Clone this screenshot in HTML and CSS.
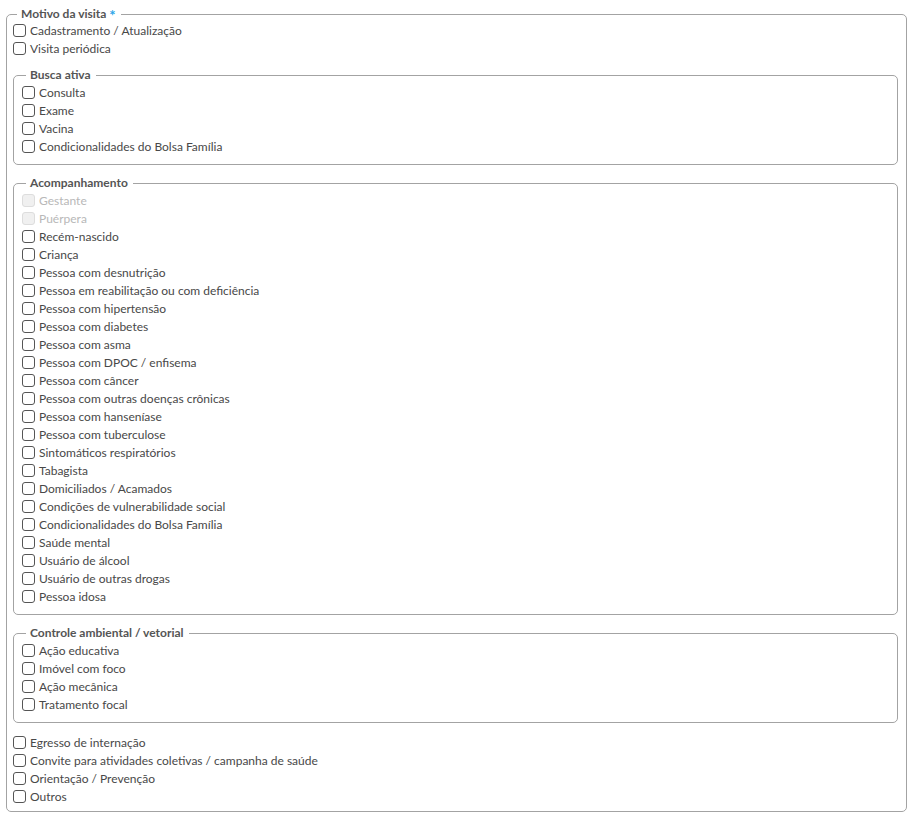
FILE: index.html
```html
<!DOCTYPE html>
<html lang="pt-BR">
<head>
    <meta charset="UTF-8">
    <meta name="viewport" content="width=device-width, initial-scale=1.0">
    <title>Motivo da visita</title>
    <link rel="stylesheet" href="styles.css">
</head>
<body>
    <form class="visit-form">
        <fieldset class="group group-main">
            <legend>Motivo da visita <span class="required">*</span></legend>
            <label class="check"><input type="checkbox"> Cadastramento / Atualização</label>
            <label class="check"><input type="checkbox"> Visita periódica</label>

            <fieldset class="group group-sub">
                <legend>Busca ativa</legend>
                <label class="check"><input type="checkbox"> Consulta</label>
                <label class="check"><input type="checkbox"> Exame</label>
                <label class="check"><input type="checkbox"> Vacina</label>
                <label class="check"><input type="checkbox"> Condicionalidades do Bolsa Família</label>
            </fieldset>

            <fieldset class="group group-sub">
                <legend>Acompanhamento</legend>
                <label class="check disabled"><input type="checkbox" disabled> Gestante</label>
                <label class="check disabled"><input type="checkbox" disabled> Puérpera</label>
                <label class="check"><input type="checkbox"> Recém-nascido</label>
                <label class="check"><input type="checkbox"> Criança</label>
                <label class="check"><input type="checkbox"> Pessoa com desnutrição</label>
                <label class="check"><input type="checkbox"> Pessoa em reabilitação ou com deficiência</label>
                <label class="check"><input type="checkbox"> Pessoa com hipertensão</label>
                <label class="check"><input type="checkbox"> Pessoa com diabetes</label>
                <label class="check"><input type="checkbox"> Pessoa com asma</label>
                <label class="check"><input type="checkbox"> Pessoa com DPOC / enfisema</label>
                <label class="check"><input type="checkbox"> Pessoa com câncer</label>
                <label class="check"><input type="checkbox"> Pessoa com outras doenças crônicas</label>
                <label class="check"><input type="checkbox"> Pessoa com hanseníase</label>
                <label class="check"><input type="checkbox"> Pessoa com tuberculose</label>
                <label class="check"><input type="checkbox"> Sintomáticos respiratórios</label>
                <label class="check"><input type="checkbox"> Tabagista</label>
                <label class="check"><input type="checkbox"> Domiciliados / Acamados</label>
                <label class="check"><input type="checkbox"> Condições de vulnerabilidade social</label>
                <label class="check"><input type="checkbox"> Condicionalidades do Bolsa Família</label>
                <label class="check"><input type="checkbox"> Saúde mental</label>
                <label class="check"><input type="checkbox"> Usuário de álcool</label>
                <label class="check"><input type="checkbox"> Usuário de outras drogas</label>
                <label class="check"><input type="checkbox"> Pessoa idosa</label>
            </fieldset>

            <fieldset class="group group-sub">
                <legend>Controle ambiental / vetorial</legend>
                <label class="check"><input type="checkbox"> Ação educativa</label>
                <label class="check"><input type="checkbox"> Imóvel com foco</label>
                <label class="check"><input type="checkbox"> Ação mecânica</label>
                <label class="check"><input type="checkbox"> Tratamento focal</label>
            </fieldset>

            <div class="after-groups">
                <label class="check"><input type="checkbox"> Egresso de internação</label>
                <label class="check"><input type="checkbox"> Convite para atividades coletivas / campanha de saúde</label>
                <label class="check"><input type="checkbox"> Orientação / Prevenção</label>
                <label class="check"><input type="checkbox"> Outros</label>
            </div>
        </fieldset>
    </form>
</body>
</html>
```

FILE: styles.css
```css
body {
    margin: 0;
    padding: 6px 11px 0 6px;
    background-color: #fff;
    font-family: Lato, 'Liberation Sans', sans-serif;
    font-size: 12px;
    color: #484848;
}
.visit-form {
    width: 901px;
}
.group {
    margin: 0;
    border: 1px solid #a3a3a3;
    border-radius: 5px;
    min-width: 0;
}
.group legend {
    margin-left: 4px;
    padding: 0 5px 0 4px;
    line-height: 18px;
    font-weight: bold;
    color: #555;
}
.group-main {
    padding: 0 6px 5px 6px;
}
.group-main > legend {
    line-height: 16px;
}
.group-sub {
    margin: 9px 2px 0 0;
    padding: 0 8px 8px 8px;
}
.check + .group-sub {
    margin-top: 8px;
}
.required {
    font-size: 15px;
    line-height: 10px;
    vertical-align: -3px;
    color: #2ba5e8;
}
.after-groups {
    margin-top: 11px;
}
.check {
    display: flex;
    align-items: center;
    gap: 4px;
    height: 18px;
    padding-bottom: 1px;
    box-sizing: border-box;
    white-space: nowrap;
}
.check input {
    appearance: none;
    -webkit-appearance: none;
    width: 13px;
    height: 13px;
    margin: 0;
    border: 1px solid #555;
    border-radius: 3px;
    background-color: #fff;
}
.check.disabled {
    color: #b8b8b8;
}
.check.disabled input {
    border-color: #ddd;
    background-color: #f0f0f0;
}
```
